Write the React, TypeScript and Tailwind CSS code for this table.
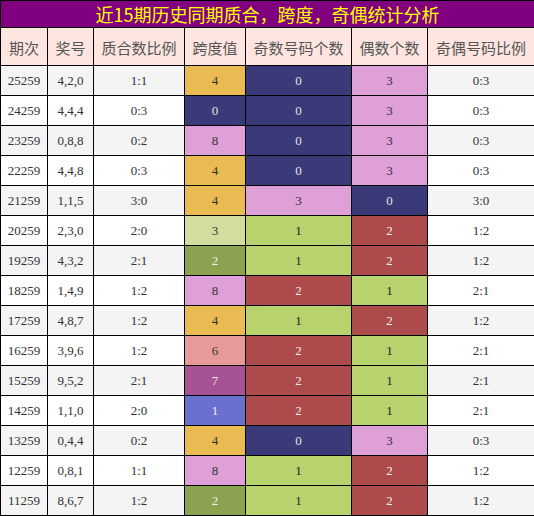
import React from "react";

const C: Record<string, string> = {
  o: "bg-[#e9bb52] text-[#333]",
  n: "bg-[#3a3a78] text-[#e4e4e4]",
  p: "bg-[#dea0d6] text-[#333]",
  g: "bg-[#b8d26e] text-[#222]",
  r: "bg-[#ad4a4c] text-[#eee]",
  l: "bg-[#d2dd9e] text-[#333]",
  v: "bg-[#8ba251] text-[#eee]",
  s: "bg-[#e8999a] text-[#333]",
  u: "bg-[#a65294] text-[#eee]",
  b: "bg-[#6b70d0] text-[#eee]",
};

const rows: [string, string, string, string, string, string, string, string, string, string][] = [
  ["25259", "4,2,0", "1:1", "4", "o", "0", "n", "3", "p", "0:3"],
  ["24259", "4,4,4", "0:3", "0", "n", "0", "n", "3", "p", "0:3"],
  ["23259", "0,8,8", "0:2", "8", "p", "0", "n", "3", "p", "0:3"],
  ["22259", "4,4,8", "0:3", "4", "o", "0", "n", "3", "p", "0:3"],
  ["21259", "1,1,5", "3:0", "4", "o", "3", "p", "0", "n", "3:0"],
  ["20259", "2,3,0", "2:0", "3", "l", "1", "g", "2", "r", "1:2"],
  ["19259", "4,3,2", "2:1", "2", "v", "1", "g", "2", "r", "1:2"],
  ["18259", "1,4,9", "1:2", "8", "p", "2", "r", "1", "g", "2:1"],
  ["17259", "4,8,7", "1:2", "4", "o", "1", "g", "2", "r", "1:2"],
  ["16259", "3,9,6", "1:2", "6", "s", "2", "r", "1", "g", "2:1"],
  ["15259", "9,5,2", "2:1", "7", "u", "2", "r", "1", "g", "2:1"],
  ["14259", "1,1,0", "2:0", "1", "b", "2", "r", "1", "g", "2:1"],
  ["13259", "0,4,4", "0:2", "4", "o", "0", "n", "3", "p", "0:3"],
  ["12259", "0,8,1", "1:1", "8", "p", "1", "g", "2", "r", "1:2"],
  ["11259", "8,6,7", "1:2", "2", "v", "1", "g", "2", "r", "1:2"],
];

const headers = ["期次", "奖号", "质合数比例", "跨度值", "奇数号码个数", "偶数个数", "奇偶号码比例"];

const cell = "flex items-center justify-center h-[29px] text-[13px] leading-none";

export default function App() {
  return (
    <div className="w-[534px] h-[516px] overflow-hidden bg-white">
      <div
        className="w-[535px] grid grid-cols-[46px_45px_90px_60px_105px_75px_106px] gap-px p-px bg-black"
        style={{ fontFamily: '"Liberation Serif", "Noto Sans CJK SC", serif' }}
      >
        <div
          className="col-span-7 h-[26px] bg-[#800080] text-[#ffff00] text-[18px] flex items-center justify-center leading-none"
          style={{ fontFamily: '"Noto Sans CJK SC", sans-serif' }}
        >
          近15期历史同期质合，跨度，奇偶统计分析
        </div>
        {headers.map((h) => (
          <div
            key={h}
            className="h-[37px] bg-[#fee5e0] text-[#555] text-[15px] flex items-center justify-center leading-none pt-[2px]"
            style={{ fontFamily: '"Noto Sans CJK SC", sans-serif' }}
          >
            {h}
          </div>
        ))}
        {rows.map((r, i) => {
          const base = i % 2 === 0 ? "bg-[#f4f4f4] text-[#333]" : "bg-white text-[#333]";
          return (
            <React.Fragment key={r[0]}>
              <div className={`${cell} ${base}`}>{r[0]}</div>
              <div className={`${cell} ${base}`}>{r[1]}</div>
              <div className={`${cell} ${base}`}>{r[2]}</div>
              <div className={`${cell} ${C[r[4]]}`}>{r[3]}</div>
              <div className={`${cell} ${C[r[6]]}`}>{r[5]}</div>
              <div className={`${cell} ${C[r[8]]}`}>{r[7]}</div>
              <div className={`${cell} ${base}`}>{r[9]}</div>
            </React.Fragment>
          );
        })}
      </div>
    </div>
  );
}
